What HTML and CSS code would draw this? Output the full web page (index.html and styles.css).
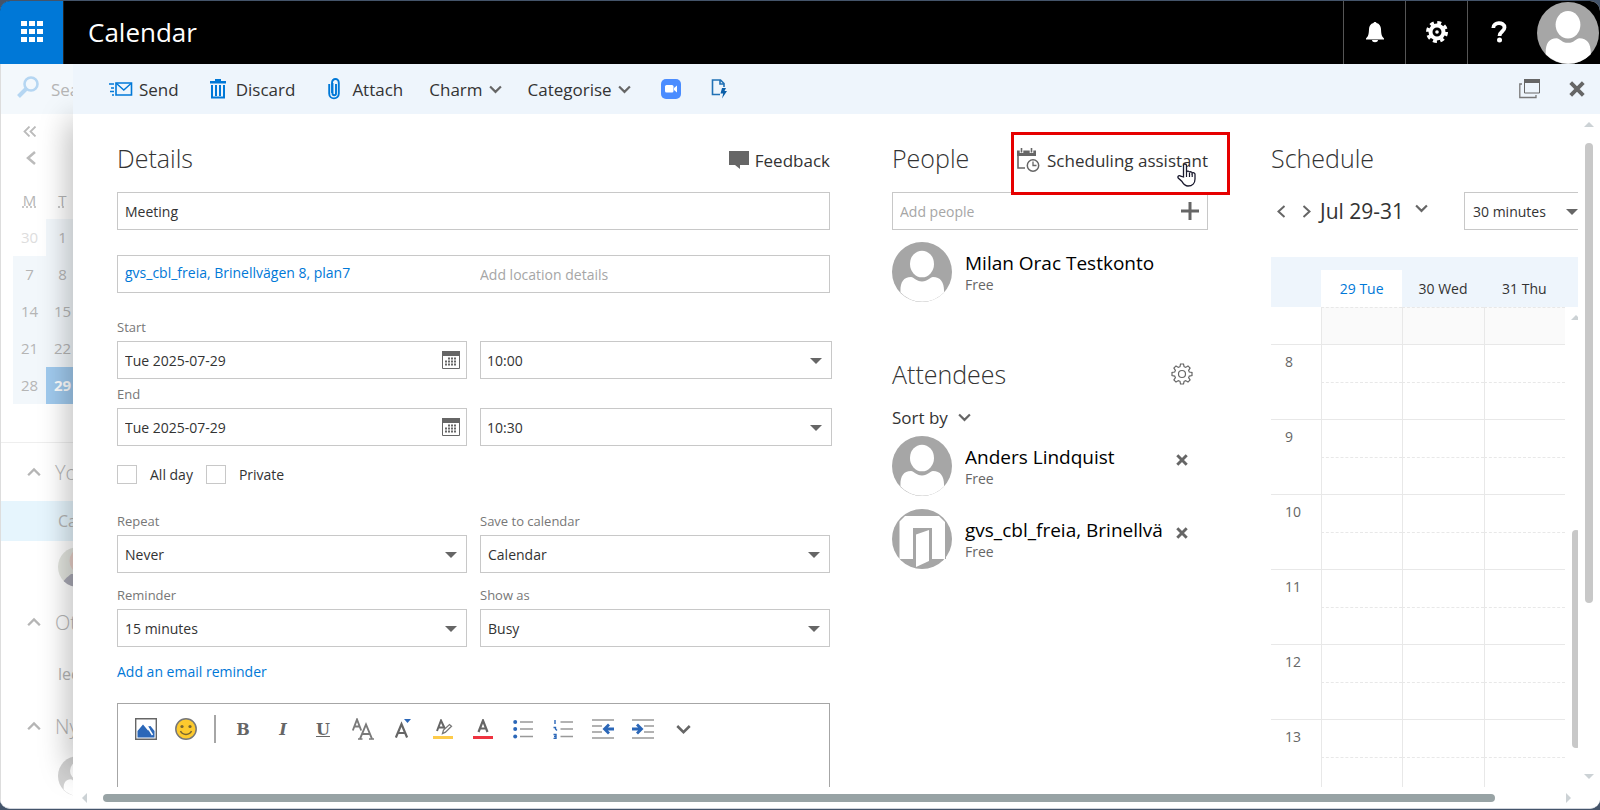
FILE: index.html
```html
<!DOCTYPE html>
<html lang="en">
<head>
  <meta charset="UTF-8">
  <meta name="viewport" content="width=device-width, initial-scale=1.0">
  <title>Calendar</title>
  <link rel="stylesheet" href="styles.css">
</head>
<body>

  <!-- Shared icons -->
  <svg class="sprite" aria-hidden="true">
    <symbol id="chevron" viewBox="0 0 12 8">
      <path d="M1 1.2l5 5 5-5" fill="none" stroke="currentColor" stroke-width="2"/>
    </symbol>
    <symbol id="cross" viewBox="0 0 14 14">
      <path d="M1.5 1.5l11 11M12.5 1.5l-11 11" fill="none" stroke="currentColor" stroke-width="3.4"/>
    </symbol>
    <symbol id="person" viewBox="0 0 60 60">
      <circle cx="30" cy="30" r="30" fill="#a6a6a6"/>
      <ellipse cx="30" cy="22" rx="12" ry="13.3" fill="#fff"/>
      <path d="M8.500 50.500C8 41 11 35 19 35c3 0 5 4.500 11 4.500S38 35 41 35c8 0 11.500 6 11 15.500A30 30 0 0 1 8.500 50.500z" fill="#fff"/>
    </symbol>
    <symbol id="date" viewBox="0 0 18 18">
      <path d="M.5.500h17v17H.5z" fill="#fff" stroke="#666"/>
      <path d="M0 0h18v5H0z" fill="#666"/>
      <path d="M6 7.500h9M3 10.500h12M3 13.500h12" stroke="#666" stroke-width="2" stroke-dasharray="2 1"/>
    </symbol>
  </svg>

  <div class="window">
    <header class="topbar">
      <button class="launcher" aria-label="Apps">
        <svg width="24" height="22" viewBox="0 0 24 22" fill="#fff">
          <path d="M1 0h6v5H1zM9 0h6v5H9zM17 0h6v5h-6zM1 8h6v5H1zM9 8h6v5H9zM17 8h6v5h-6zM1 16h6v5H1zM9 16h6v5H9zM17 16h6v5h-6z"/>
        </svg>
      </button>
      <h1>Calendar</h1>
      <nav class="tools">
        <button aria-label="Notifications">
          <svg width="20" height="22" viewBox="0 0 20 22" fill="#fff"><path d="M8.500 2C8.500.5 11.500.5 11.500 2c3 .8 4.300 3 4.500 6 .2 5 .5 7 3 9.500v1H1v-1C3.500 15 3.800 13 4 8c.2-3 1.500-5.200 4.500-6zM7 19h6c0 3-6 3-6 0z"/></svg>
        </button>
        <button aria-label="Settings">
          <svg width="22" height="22" viewBox="0 0 22 22">
            <circle cx="11" cy="11" r="6.500" fill="none" stroke="#fff" stroke-width="4"/>
            <circle cx="11" cy="11" r="9.500" fill="none" stroke="#fff" stroke-width="3" stroke-dasharray="4 3.460"/>
            <circle cx="11" cy="11" r="1.800" fill="#fff"/>
          </svg>
        </button>
        <button aria-label="Help">
          <svg width="16" height="22" viewBox="0 0 16 22"><path d="M2.300 7C2 .8 13.500.5 13.500 6.500c0 4-5 4-5 8.500" fill="none" stroke="#fff" stroke-width="3.800"/><circle cx="8.500" cy="19" r="2.500" fill="#fff"/></svg>
        </button>
        <button class="me" aria-label="Account">
          <svg width="62" height="62"><use href="#person"/></svg>
        </button>
      </nav>
    </header>

    <div class="workspace">
      <!-- Folder pane behind the form -->
      <aside class="sidebar">
        <div class="search">
          <svg width="22" height="22" viewBox="0 0 22 22" fill="none" stroke="#b5d6f2"><circle cx="14" cy="8" r="6.500" stroke-width="2.600"/><path d="M9 13l-7.500 7.500" stroke-width="4"/></svg>
          <span>Sea</span>
        </div>
        <div class="collapse">
          <svg width="14" height="11" viewBox="0 0 14 11" fill="none" stroke="#bbb" stroke-width="1.800"><path d="M6.500.5l-5 5 5 5M12.500.5l-5 5 5 5"/></svg>
          <svg width="10" height="14" viewBox="0 0 10 14" fill="none" stroke="#bbb" stroke-width="2.500"><path d="M9 1L2 7l7 6"/></svg>
        </div>
        <div class="mini">
          <abbr>M</abbr><abbr>T</abbr>
          <span class="other">30</span><span class="on">1</span>
          <span class="on">7</span><span class="on">8</span>
          <span class="on">14</span><span class="on">15</span>
          <span class="on">21</span><span class="on">22</span>
          <span class="on">28</span><span class="today">29</span>
        </div>
        <div class="group first"><svg width="14" height="10"><use href="#chevron"/></svg>Yo</div>
        <div class="item selected">Ca</div>
        <div class="item photo">
          <svg width="40" height="40" viewBox="0 0 40 40">
            <clipPath id="round"><circle cx="20" cy="20" r="20"/></clipPath>
            <g clip-path="url(#round)"><path d="M0 0h40v40H0z" fill="#e3e5df"/><ellipse cx="20" cy="14" rx="8.500" ry="11" fill="#e8cfc8"/><path d="M3 40c2-8 7-10 10-13h14l13 13z" fill="#a9a9b5"/></g>
          </svg>
        </div>
        <div class="group"><svg width="14" height="10"><use href="#chevron"/></svg>Ot</div>
        <div class="item plain">lec</div>
        <div class="group"><svg width="14" height="10"><use href="#chevron"/></svg>Ny</div>
        <div class="item ghost"><svg width="40" height="40"><use href="#person"/></svg></div>
      </aside>

      <main class="compose">
        <div class="commands">
          <button>
            <svg width="24" height="14" viewBox="0 0 24 14" fill="none" stroke="#0078d7"><path d="M7 1h15.500v12H7z" stroke-width="1.600"/><path d="M7.500 1.500l7.300 6.500 7.200-6.500" stroke-width="1.400"/><path d="M0 2h5M2 6h3M1 9.500h4M3 13h2" stroke-width="1.500"/></svg>
            Send
          </button>
          <button class="discard">
            <svg width="16" height="20" viewBox="0 0 16 20"><path d="M0 2h5V0h6v2h5v2.500H0z" fill="#0078d7"/><path d="M2 6v12.500h12V6M6 6v11M10 6v11" fill="none" stroke="#0078d7" stroke-width="2"/></svg>
            Discard
          </button>
          <button class="attach">
            <svg width="12" height="22" viewBox="0 0 12 22"><path d="M8 6v9.500c0 2.300-3.500 2.300-3.500 0V5.500M4.500 15.500V5M1.200 6v9.500c0 6.500 9.600 6.500 9.600 0V5c0-5.300-6.800-5.300-6.800 0v10" fill="none" stroke="#0078d7" stroke-width="1.900"/></svg>
            Attach
          </button>
          <button class="menu">Charm <svg width="13" height="9"><use href="#chevron"/></svg></button>
          <button class="menu">Categorise <svg width="13" height="9"><use href="#chevron"/></svg></button>
          <button class="zoom" aria-label="Video meeting">
            <svg width="20" height="20" viewBox="0 0 20 20"><rect width="20" height="20" rx="5" fill="#4a8cff"/><rect x="4" y="6" width="8.500" height="7.500" rx="1.500" fill="#fff"/><path d="M13 9l3-2.500v7L13 11z" fill="#fff"/></svg>
          </button>
          <button aria-label="Templates">
            <svg width="17" height="20" viewBox="0 0 17 20"><path d="M9 15.500H1.500V1h8L13 4.500V8M9 1v4h4" fill="none" stroke="#2171b5" stroke-width="1.600"/><path d="M11 9h4l-1.500 3H16l-5 7.500 1.200-5H9.500z" fill="#0a5ea8"/></svg>
          </button>
          <div class="win-actions">
            <button aria-label="Open in window">
              <svg width="22" height="20" viewBox="0 0 22 20"><path d="M5.500 1h15v13h-15z" fill="none" stroke="#666"/><path d="M5 0h16v4H5z" fill="#666"/><path d="M3 5H.8v13.500H17V16" fill="none" stroke="#777" stroke-width="1.300"/></svg>
            </button>
            <button aria-label="Close"><svg width="16" height="16"><use href="#cross"/></svg></button>
          </div>
        </div>

        <div class="columns">
          <form class="details">
            <div class="head">
              <h2>Details</h2>
              <button type="button" class="feedback">
                <svg width="20" height="18" viewBox="0 0 20 18"><path d="M0 0h20v14h-9v4l-5-4H0z" fill="#666"/></svg>
                Feedback
              </button>
            </div>
            <input class="field subject" type="text" value="Meeting" aria-label="Subject">
            <div class="field location">
              <a href="#">gvs_cbl_freia, Brinellvägen 8, plan7</a>
              <input type="text" placeholder="Add location details" aria-label="Location">
            </div>

            <div class="row start">
              <div class="cell">
                <label for="start">Start</label>
                <div class="picker"><input class="field" id="start" type="text" value="Tue 2025-07-29"><svg width="18" height="18"><use href="#date"/></svg></div>
              </div>
              <div class="cell">
                <div class="select time"><select class="field" aria-label="Start time"><option>10:00</option></select></div>
              </div>
            </div>
            <div class="row end">
              <div class="cell">
                <label for="end">End</label>
                <div class="picker"><input class="field" id="end" type="text" value="Tue 2025-07-29"><svg width="18" height="18"><use href="#date"/></svg></div>
              </div>
              <div class="cell">
                <div class="select time"><select class="field" aria-label="End time"><option>10:30</option></select></div>
              </div>
            </div>

            <div class="checks">
              <label><input type="checkbox">All day</label>
              <label><input type="checkbox">Private</label>
            </div>

            <div class="row repeat">
              <div class="cell">
                <label for="repeat">Repeat</label>
                <div class="select"><select class="field" id="repeat"><option>Never</option></select></div>
              </div>
              <div class="cell">
                <label for="save">Save to calendar</label>
                <div class="select"><select class="field" id="save"><option>Calendar</option></select></div>
              </div>
            </div>
            <div class="row reminder">
              <div class="cell">
                <label for="reminder">Reminder</label>
                <div class="select"><select class="field" id="reminder"><option>15 minutes</option></select></div>
              </div>
              <div class="cell">
                <label for="show">Show as</label>
                <div class="select"><select class="field" id="show"><option>Busy</option></select></div>
              </div>
            </div>
            <a class="email-link" href="#">Add an email reminder</a>

            <div class="editor">
              <div class="format">
                <button type="button" aria-label="Picture"><svg width="22" height="22" viewBox="0 0 22 22"><path d="M.7.700h20.600v20.600H.7z" fill="#fff" stroke="#666" stroke-width="1.400"/><path d="M2.500 19.500V13L8 6.500l5 6 2-1-2-3 2.500-.5 4 5v6.500z" fill="#2b67b8"/><path d="M12.500 9l5 8" stroke="#fff" stroke-width="1.500"/></svg></button>
                <button type="button" aria-label="Emoji"><svg width="22" height="22" viewBox="0 0 22 22"><circle cx="11" cy="11" r="10.200" fill="#fdca2e" stroke="#777" stroke-width="1.500"/><circle cx="7" cy="8.500" r="1.600" fill="#776530"/><circle cx="15" cy="8.500" r="1.600" fill="#776530"/><path d="M5.500 13c2 4.500 9 4.500 11 0" fill="none" stroke="#776530" stroke-width="1.500"/></svg></button>
                <span class="divider"></span>
                <button type="button" class="letter">B</button>
                <button type="button" class="letter italic">I</button>
                <button type="button" class="letter underline">U</button>
                <button type="button" aria-label="Font"><svg width="22" height="22" viewBox="0 0 22 22" fill="none" stroke="#7a7a7a" stroke-width="1.900"><path d="M.8 12.500L5 1.500l4.200 11M2.500 8.500h5M8 20.800L14 6.500l6 14.300M10 16h8"/><path d="M6 21h4.500M17 21h5" stroke-width="1.500"/></svg></button>
                <button type="button" aria-label="Font size"><svg width="16" height="20" viewBox="0 0 16 20"><path d="M.9 18.500L6.500 5l5.600 13.500M3 14h7" fill="none" stroke="#666" stroke-width="2.200"/><path d="M9 0h7l-3.500 4z" fill="#2b67b8"/></svg></button>
                <button type="button" aria-label="Highlight"><svg width="20" height="20" viewBox="0 0 20 20"><path d="M4 12L8 1.500 12 10M5.500 8.500H11" fill="none" stroke="#666" stroke-width="2"/><path d="M9.500 14.500l1-3.500 6-5.500 2 1.700-6 6z" fill="#fff" stroke="#777" stroke-width="1.300"/><path d="M0 17h20v3H0z" fill="#fdcb4a"/></svg></button>
                <button type="button" aria-label="Font colour"><svg width="20" height="20" viewBox="0 0 20 20"><path d="M5.500 13L10 1.500 14.500 13M7 9.500h6" fill="none" stroke="#666" stroke-width="2.200"/><path d="M0 17h20v3H0z" fill="#ef3340"/></svg></button>
                <button type="button" aria-label="Bullets"><svg width="20" height="20" viewBox="0 0 20 20"><path d="M7 3h13M7 10h13M7 17.500h13" stroke="#999" stroke-width="1.500"/><g fill="#2b67b8"><circle cx="2.200" cy="3" r="2"/><circle cx="2.200" cy="10" r="2"/><circle cx="2.200" cy="17.500" r="2"/></g></svg></button>
                <button type="button" aria-label="Numbering"><svg width="20" height="20" viewBox="0 0 20 20"><path d="M7.500 3H20M7.500 10H20M7.500 17.500H20" stroke="#999" stroke-width="1.500"/><path d="M2 1v4M.5 8.500h2V10l1.500 1.500M.5 15.500h2.500v4H.5M1 17.500h2" fill="none" stroke="#2b67b8" stroke-width="1.400"/></svg></button>
                <button type="button" aria-label="Decrease indent"><svg width="22" height="20" viewBox="0 0 22 20"><path d="M0 1h22M0 7h10M0 13h10M0 19h22" stroke="#999" stroke-width="1.500"/><path d="M22 10H13M17 5.500L12.500 10l4.500 4.500" fill="none" stroke="#2b67b8" stroke-width="2.800"/></svg></button>
                <button type="button" aria-label="Increase indent"><svg width="22" height="20" viewBox="0 0 22 20"><path d="M0 1h22M12 7h10M12 13h10M0 19h22" stroke="#999" stroke-width="1.500"/><path d="M0 10h9M5 5.500L9.500 10 5 14.500" fill="none" stroke="#2b67b8" stroke-width="2.800"/></svg></button>
                <button type="button" aria-label="More"><svg width="15" height="11"><use href="#chevron"/></svg></button>
              </div>
            </div>
          </form>

          <section class="people">
            <div class="head">
              <h2>People</h2>
              <button class="assistant">
                <svg width="23" height="24" viewBox="0 0 23 24" fill="none" stroke="#666"><path d="M8 20H1V6" stroke-width="1.600"/><path d="M0 2.500h19V8H0z" fill="#666" stroke="none"/><path d="M4.500 0v5M14.500 0v5" stroke="#fff" stroke-width="3.600"/><path d="M4.500 0v4.500M14.500 0v4.500" stroke-width="1.600"/><circle cx="16" cy="17.500" r="5.700" fill="#fff" stroke-width="1.500"/><path d="M16 13.500v4h3.500" stroke-width="1.300"/></svg>
                Scheduling assistant
                <span class="highlight"></span>
                <svg class="pointer" width="20" height="24" viewBox="0 0 20 24"><path d="M6.500 14V2.500c0-2 3-2 3 0V9c.5-1.500 3-1 3 .5.500-1.200 2.700-.8 2.700.7.800-1 2.800-.5 2.800 1V16c0 4-2.500 7-7 7-3.500 0-4.500-2-6-4.500L1.200 15c-1-2 1.300-3 2.500-1.800z" fill="#fff" stroke="#1a1a2e" stroke-width="1.300"/><path d="M9.500 9v5M12.500 10v4M15.200 10.500V14" stroke="#1a1a2e" stroke-width="1.200"/></svg>
              </button>
            </div>
            <div class="field add">
              <input type="text" placeholder="Add people" aria-label="Add people">
              <svg width="18" height="18" viewBox="0 0 18 18"><path d="M9 0v18M0 9h18" stroke="#666" stroke-width="3"/></svg>
            </div>
            <div class="person">
              <svg class="avatar" width="60" height="60"><use href="#person"/></svg>
              <div class="who"><div class="name">Milan Orac Testkonto</div><div class="status">Free</div></div>
            </div>

            <div class="attendees-head">
              <h2>Attendees</h2>
              <button aria-label="Attendee options">
                <svg width="22" height="22" viewBox="0 0 22 22" fill="none" stroke="#666" stroke-width="1.200"><circle cx="11" cy="11" r="3.500"/><path d="M9.500 1h3l.6 2.700 1.500.7L17 2.900l2.100 2.100-1.500 2.400.7 1.600 2.700.5v3l-2.700.6-.7 1.500 1.500 2.400-2.100 2.100-2.400-1.500-1.500.7-.6 2.700h-3l-.5-2.700-1.600-.7L5 19.100 2.900 17l1.500-2.400-.7-1.500L1 12.500v-3L3.700 9l.7-1.600L2.900 5 5 2.900l2.400 1.500L9 3.700z"/></svg>
              </button>
            </div>
            <button class="sort">Sort by <svg width="13" height="9"><use href="#chevron"/></svg></button>
            <div class="person">
              <svg class="avatar" width="60" height="60"><use href="#person"/></svg>
              <div class="who"><div class="name">Anders Lindquist</div><div class="status">Free</div></div>
              <button class="remove" aria-label="Remove"><svg width="12" height="12"><use href="#cross"/></svg></button>
            </div>
            <div class="person">
              <svg class="avatar" width="60" height="60" viewBox="0 0 60 60"><circle cx="30" cy="30" r="30" fill="#a6a6a6"/><path d="M7.500 12.500L13 7h34l6 6v37H40V19H21v31H7.500z" fill="#fff"/><path d="M24 58V25.500L37 21v31z" fill="#fff"/><path d="M53.500 12v38" stroke="#a6a6a6"/></svg>
              <div class="who"><div class="name">gvs_cbl_freia, Brinellvä</div><div class="status">Free</div></div>
              <button class="remove" aria-label="Remove"><svg width="12" height="12"><use href="#cross"/></svg></button>
            </div>
          </section>

          <section class="schedule">
            <div class="head"><h2>Schedule</h2></div>
            <div class="range">
              <button aria-label="Previous"><svg width="9" height="13" viewBox="0 0 9 13"><path d="M7.500 1L1.500 6.500l6 5.500" fill="none" stroke="#666" stroke-width="2"/></svg></button>
              <button aria-label="Next"><svg width="9" height="13" viewBox="0 0 9 13"><path d="M1.500 1l6 5.500-6 5.500" fill="none" stroke="#666" stroke-width="2"/></svg></button>
              <button class="dates">Jul 29-31 <svg width="13" height="9"><use href="#chevron"/></svg></button>
              <div class="select duration"><select class="field" aria-label="Duration"><option>30 minutes</option></select></div>
            </div>
            <div class="week">
              <table>
                <colgroup><col class="hours"><col><col><col><col class="gutter"></colgroup>
                <thead>
                  <tr><th></th><th class="current">29 Tue</th><th>30 Wed</th><th>31 Thu</th><th></th></tr>
                </thead>
                <tbody>
                  <tr class="half off"><th></th><td></td><td></td><td></td></tr>
                  <tr class="hour"><th rowspan="2">8</th><td></td><td></td><td></td></tr>
                  <tr class="half"><td></td><td></td><td></td></tr>
                  <tr class="hour"><th rowspan="2">9</th><td></td><td></td><td></td></tr>
                  <tr class="half"><td></td><td></td><td></td></tr>
                  <tr class="hour"><th rowspan="2">10</th><td></td><td></td><td></td></tr>
                  <tr class="half"><td></td><td></td><td></td></tr>
                  <tr class="hour"><th rowspan="2">11</th><td></td><td></td><td></td></tr>
                  <tr class="half"><td></td><td></td><td></td></tr>
                  <tr class="hour"><th rowspan="2">12</th><td></td><td></td><td></td></tr>
                  <tr class="half"><td></td><td></td><td></td></tr>
                  <tr class="hour"><th rowspan="2">13</th><td></td><td></td><td></td></tr>
                  <tr class="half"><td></td><td></td><td></td></tr>
                </tbody>
              </table>
              <div class="week-scroll"><span class="tri up"></span><span class="thumb"></span></div>
            </div>
          </section>

          <div class="v-scroll"><span class="tri up"></span><span class="thumb"></span><span class="tri down"></span></div>
        </div>

        <div class="h-scroll"><span class="tri left"></span><span class="thumb"></span><span class="tri right"></span></div>
      </main>
    </div>
  </div>

</body>
</html>
```
FILE: styles.css
```css
* {
  box-sizing: border-box;
}
body {
  margin: 0;
  background: #44546a;
  font-family: "Open Sans", "Noto Sans", sans-serif;
  font-size: 14px;
  color: #333;
}
button, input, select {
  font: inherit;
  color: inherit;
}
button {
  display: flex;
  align-items: center;
  padding: 0;
  border: none;
  background: none;
  cursor: pointer;
}
svg {
  display: block;
  flex: none;
}
a {
  color: #0078d7;
  text-decoration: none;
}
h1, h2 {
  margin: 0;
  font-weight: 400;
}
h2 {
  font-size: 25px;
  font-weight: 300;
  line-height: 32px;
}
.sprite {
  position: absolute;
  width: 0;
  height: 0;
}
.window {
  display: flex;
  flex-direction: column;
  height: calc(100vh - 2px);
  margin: 1px 0;
  border-radius: 10px;
  background: #fff;
  border-bottom: 1px solid #d0d4dc;
  overflow: hidden;
}

/* Top bar */
.topbar {
  position: relative;
  z-index: 2;
  display: flex;
  flex: none;
  align-items: center;
  height: 63px;
  background: #000;
  color: #fff;
}
.launcher {
  justify-content: center;
  width: 64px;
  height: 63px;
  padding-bottom: 2px;
  background: #0078d7;
  border-right: 1px solid #222;
}
.topbar h1 {
  margin-left: 24px;
  padding-bottom: 2px;
  font-size: 26px;
}
.tools {
  display: flex;
  margin: 0 1px 0 auto;
}
.tools button {
  justify-content: center;
  width: 62px;
  height: 63px;
  padding-bottom: 2px;
  border-left: 1px solid #555;
}
.tools .me {
  width: 63px;
  margin-left: 7px;
  padding: 0;
  border: none;
}

.workspace {
  display: flex;
  flex: 1;
  min-height: 0;
}

/* Sidebar */
.sidebar {
  position: relative;
  flex: none;
  width: 73px;
  overflow: hidden;
  border-left: 1px solid #ddd;
  color: #b5b5b5;
}
.sidebar::after {
  content: "";
  position: absolute;
  top: 56px;
  right: -20px;
  bottom: 40px;
  width: 20px;
  box-shadow: 0 0 32px rgba(0, 0, 0, 0.4);
}
.search {
  display: flex;
  align-items: center;
  gap: 12px;
  height: 50px;
  padding-left: 16px;
  background: #f3f8fc;
  font-size: 17px;
}
.search svg {
  margin-bottom: 4px;
}
.collapse {
  display: flex;
  flex-direction: column;
  gap: 14px;
  padding: 12px 0 0 22px;
}
.collapse svg + svg {
  margin-left: 3px;
}
.mini {
  display: grid;
  grid-template-columns: 33px 33px;
  grid-auto-rows: 37px;
  margin: 17px 0 0 12px;
  font-size: 15px;
  text-align: center;
  line-height: 36px;
}
.mini abbr {
  text-decoration: underline dotted;
}
.mini .other {
  color: #ddd;
}
.mini .on {
  background: #f2f7fb;
}
.mini .today {
  background: #a0caee;
  color: #fff;
  font-weight: 700;
}
.group {
  display: flex;
  align-items: center;
  gap: 14px;
  height: 58px;
  padding-left: 26px;
  font-size: 20px;
  font-weight: 300;
}
.group svg {
  transform: rotate(180deg);
}
.group.first {
  height: 59px;
  margin-top: 38px;
  border-top: 1px solid #eee;
}
.item {
  display: flex;
  align-items: center;
  height: 52px;
  padding-left: 57px;
  font-size: 16px;
}
.item.selected {
  height: 40px;
  background: #e6f5fd;
}
.item.plain {
  height: 46px;
}
.item.ghost {
  height: 42px;
  opacity: 0.5;
}

/* Compose panel */
.compose {
  display: flex;
  flex: 1;
  flex-direction: column;
  min-width: 0;
  background: #fff;
}
.commands {
  display: flex;
  flex: none;
  align-items: center;
  height: 50px;
  padding: 0 15px 0 36px;
  background: #eef5fc;
  font-size: 17px;
}
.commands button {
  gap: 6px;
}
.commands .discard {
  margin-left: 31px;
  gap: 10px;
}
.commands .attach {
  margin-left: 33px;
  gap: 12px;
}
.commands .menu {
  margin-left: 26px;
}
.commands .zoom {
  margin: 0 30px;
}
.menu svg, .sort svg, .dates svg {
  color: #666;
}
.win-actions {
  display: flex;
  align-items: center;
  gap: 28px;
  margin-left: auto;
  color: #666;
}
.columns {
  position: relative;
  display: flex;
  flex: 1;
  gap: 62px;
  min-height: 0;
  padding: 0 22px 0 44px;
  overflow: hidden;
}
.head {
  display: flex;
  align-items: flex-start;
  justify-content: space-between;
  height: 78px;
  padding-top: 28px;
}
.head button {
  height: 36px;
  font-size: 17px;
}

/* Form fields */
.field {
  width: 100%;
  height: 38px;
  padding: 0 7px;
  border: 1px solid #c8c8c8;
  border-radius: 0;
  background: #fff;
  outline: none;
}
input::placeholder {
  color: #a6a6a6;
  opacity: 1;
}
.details {
  flex: 1;
  min-width: 0;
}
.feedback {
  gap: 6px;
}
.location {
  display: grid;
  grid-template-columns: 1fr 1fr;
  gap: 13px;
  align-items: center;
  margin-top: 25px;
}
.location a {
  padding-bottom: 4px;
}
.location input {
  border: none;
  padding: 0;
  outline: none;
}
.row {
  display: grid;
  grid-template-columns: 1fr 1fr;
  gap: 13px;
  align-items: end;
}
.cell label {
  display: block;
  height: 24px;
  font-size: 13px;
  line-height: 20px;
  color: #777;
}
.start {
  margin-top: 24px;
}
.end {
  margin-top: 5px;
}
.repeat {
  margin-top: 18px;
}
.reminder {
  margin-top: 12px;
}
.picker, .select {
  position: relative;
}
.picker svg {
  position: absolute;
  top: 10px;
  right: 7px;
}
select.field {
  display: block;
  appearance: none;
}
.select::after {
  content: "";
  position: absolute;
  top: 17px;
  right: 10px;
  border: 6px solid transparent;
  border-top-color: #666;
  border-bottom: none;
  pointer-events: none;
}
.select.time {
  margin-right: -2px;
}
.select.time .field {
  padding-left: 6px;
}
.checks {
  display: flex;
  gap: 13px;
  height: 38px;
  margin-top: 9px;
}
.checks label {
  display: flex;
  align-items: center;
  gap: 13px;
}
.checks input {
  appearance: none;
  width: 20px;
  height: 19px;
  margin: 0;
  border: 1px solid #c8c8c8;
}
.email-link {
  display: block;
  margin-top: 13px;
  line-height: 24px;
}
.editor {
  height: 200px;
  margin-top: 19px;
  border: 1px solid #a6a6a6;
}
.format {
  display: flex;
  align-items: center;
  height: 50px;
  padding-left: 8px;
}
.format button {
  justify-content: center;
  width: 40px;
  height: 30px;
  color: #666;
}
.divider {
  width: 2px;
  height: 28px;
  margin: 0 7px 0 8px;
  background: #a6a6a6;
}
.format .letter {
  font-family: "DejaVu Serif", serif;
  font-size: 16px;
  font-weight: 700;
}
.format .italic {
  font-style: italic;
}
.format .underline {
  text-decoration: underline;
}

/* People */
.people {
  flex: none;
  width: 316px;
}
.assistant {
  position: relative;
  gap: 7px;
}
.highlight {
  position: absolute;
  top: -10px;
  right: -22px;
  width: 219px;
  height: 63px;
  border: 3px solid #e60000;
}
.pointer {
  position: absolute;
  right: 11px;
  bottom: -9px;
}
.add {
  display: flex;
  align-items: center;
}
.add input {
  flex: 1;
  min-width: 0;
  padding: 0;
  border: none;
  outline: none;
}
.add svg {
  margin-right: 1px;
}
.person {
  display: flex;
  align-items: center;
  gap: 13px;
  margin-bottom: 13px;
}
.add + .person {
  margin: 12px 0 0;
}
.who {
  flex: 1;
  min-width: 0;
  padding-top: 2px;
}
.name {
  overflow: hidden;
  font-size: 19px;
  line-height: 24px;
  color: #000;
  white-space: nowrap;
}
.status {
  line-height: 20px;
  color: #666;
}
.remove {
  justify-content: center;
  width: 22px;
  height: 26px;
  margin: 0 15px 12px -8px;
  color: #666;
}
.attendees-head {
  display: flex;
  align-items: center;
  justify-content: space-between;
  margin-top: 56px;
  padding-right: 15px;
}
.sort {
  gap: 10px;
  height: 32px;
  margin: 11px 0 3px;
  font-size: 17px;
}

/* Schedule */
.schedule {
  flex: none;
  width: 307px;
  margin-left: 1px;
  overflow: hidden;
}
.range {
  display: flex;
  align-items: center;
  gap: 16px;
  height: 38px;
  padding-left: 6px;
}
.dates {
  gap: 11px;
  margin-left: -7px;
  font-size: 21px;
  white-space: nowrap;
}
.dates svg {
  margin-bottom: 6px;
}
.duration {
  flex: none;
  width: 124px;
  margin-left: auto;
  margin-right: -10px;
}
.duration .field {
  padding-left: 8px;
}
.week {
  position: relative;
  margin-top: 27px;
}
.week table {
  width: 100%;
  table-layout: fixed;
  border-collapse: separate;
  border-spacing: 0;
}
.hours {
  width: 50px;
}
.gutter {
  width: 13px;
}
.week th, .week td {
  padding: 0;
  font-weight: 400;
}
thead th {
  height: 50px;
  background: #eef5fc;
}
.week thead th {
  padding-top: 13px;
}
.week thead .current {
  background: linear-gradient(#eef5fc 13px, #fff 13px);
  color: #0078d7;
}
tbody td {
  border-left: 1px solid #e8e8e8;
}
.hour td, .hour th {
  height: 38px;
  border-top: 1px solid #e8e8e8;
}
.half td, .half th {
  height: 37px;
}
.half td {
  border-top: 1px dashed #e8e8e8;
}
.off td {
  background: #fafafa;
}
.week tbody th {
  padding: 7px 0 0 14px;
  text-align: left;
  vertical-align: top;
  color: #666;
}

/* Scrollbars */
.tri {
  border: 5px solid transparent;
}
.tri.up {
  border-bottom-color: #ccd2d5;
  border-top: none;
}
.tri.down {
  border-top-color: #ccd2d5;
  border-bottom: none;
}
.tri.left {
  border-right-color: #ccd2d5;
  border-left: none;
}
.tri.right {
  border-left-color: #ccd2d5;
  border-right: none;
}
.thumb {
  border-radius: 4px;
  background: #c8c8c8;
}
.week-scroll {
  position: absolute;
  top: 58px;
  right: -2px;
  display: flex;
  flex-direction: column;
  align-items: center;
  gap: 210px;
  width: 8px;
}
.week-scroll .thumb {
  width: 8px;
  height: 218px;
}
.v-scroll {
  position: absolute;
  top: 8px;
  right: 6px;
  bottom: 8px;
  display: flex;
  flex-direction: column;
  align-items: center;
}
.v-scroll .thumb {
  width: 8px;
  height: 70%;
  margin: 16px 0 auto;
}
.h-scroll {
  display: flex;
  flex: none;
  align-items: center;
  height: 21px;
  padding: 0 29px 0 9px;
}
.h-scroll .thumb {
  flex: 1;
  height: 8px;
  margin: 0 71px 0 16px;
  background: #98a3a5;
}
```
